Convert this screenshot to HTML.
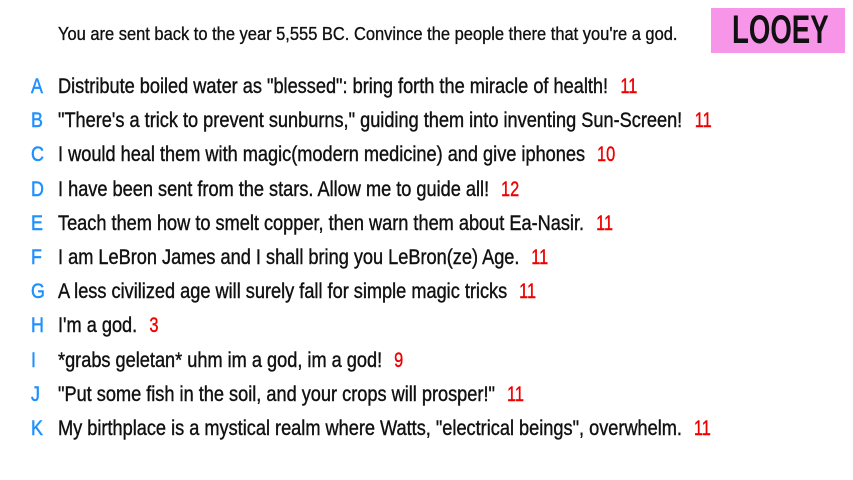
<!DOCTYPE html>
<html><head><meta charset="utf-8"><style>
body{margin:0;width:853px;height:480px;background:#fff;overflow:hidden;position:relative;font-family:"Liberation Sans",sans-serif;}
.r{position:absolute;left:0;height:30px;width:900px;}
.l{position:absolute;left:31px;top:0;color:#1e90ff;font-size:21px;line-height:30px;transform:scaleX(.85);transform-origin:left;-webkit-text-stroke:.5px #1e90ff;}
.t{position:absolute;left:58px;top:0;white-space:nowrap;font-size:21px;line-height:30px;color:#111;transform:scaleX(.865);transform-origin:left;-webkit-text-stroke:.4px #111;}
.n{color:#e00;margin-left:13px;-webkit-text-stroke:.4px #e00;display:inline-block;transform:scaleX(.9);}
.h{position:absolute;left:58px;top:20px;font-size:18.5px;line-height:28px;white-space:nowrap;color:#111;transform:scaleX(.89);transform-origin:left;-webkit-text-stroke:.35px #111;}
.box{position:absolute;left:711px;top:8px;width:134px;height:45px;background:#f795e9;}
.box span{position:absolute;left:21px;top:0;font-size:40px;line-height:45px;font-weight:bold;color:#111;transform:scaleX(.69);transform-origin:left;}
</style></head><body>
<div class="h">You are sent back to the year 5,555 BC. Convince the people there that you're a god.</div>
<div class="box"><span>LOOEY</span></div>
<div class="r" style="top:72px"><span class="l">A</span><span class="t">Distribute boiled water as "blessed": bring forth the miracle of health!<span class="n">11</span></span></div>
<div class="r" style="top:106px"><span class="l">B</span><span class="t">"There's a trick to prevent sunburns," guiding them into inventing Sun-Screen!<span class="n">11</span></span></div>
<div class="r" style="top:140px"><span class="l">C</span><span class="t">I would heal them with magic(modern medicine) and give iphones<span class="n">10</span></span></div>
<div class="r" style="top:175px"><span class="l">D</span><span class="t">I have been sent from the stars. Allow me to guide all!<span class="n">12</span></span></div>
<div class="r" style="top:209px"><span class="l">E</span><span class="t">Teach them how to smelt copper, then warn them about Ea-Nasir.<span class="n">11</span></span></div>
<div class="r" style="top:243px"><span class="l">F</span><span class="t">I am LeBron James and I shall bring you LeBron(ze) Age.<span class="n">11</span></span></div>
<div class="r" style="top:277px"><span class="l">G</span><span class="t">A less civilized age will surely fall for simple magic tricks<span class="n">11</span></span></div>
<div class="r" style="top:311px"><span class="l">H</span><span class="t">I'm a god.<span class="n">3</span></span></div>
<div class="r" style="top:346px"><span class="l">I</span><span class="t">*grabs geletan* uhm im a god, im a god!<span class="n">9</span></span></div>
<div class="r" style="top:380px"><span class="l">J</span><span class="t">"Put some fish in the soil, and your crops will prosper!"<span class="n">11</span></span></div>
<div class="r" style="top:414px"><span class="l">K</span><span class="t">My birthplace is a mystical realm where Watts, "electrical beings", overwhelm.<span class="n">11</span></span></div>
</body></html>
